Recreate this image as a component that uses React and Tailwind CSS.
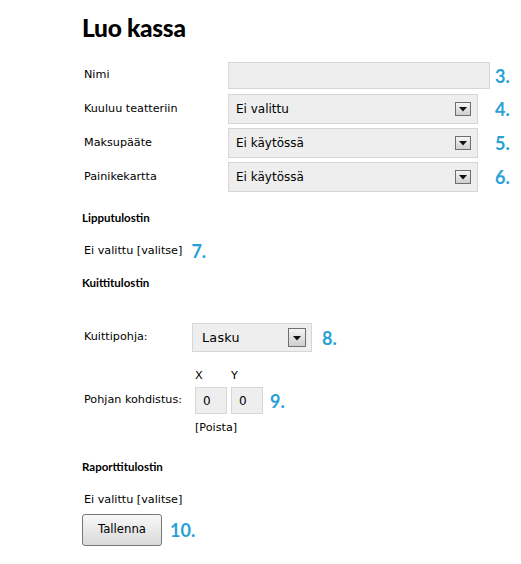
import React from "react";

const num = "font-['Lato',sans-serif] font-bold text-[18px] leading-none text-[#27a1d6]";
const label = "font-['DejaVu_Sans',sans-serif] text-[11.2px] text-[#000000]";
const heading = "font-['Lato',sans-serif] font-bold text-[11.5px] text-[#000000] h-[20px] flex items-center";

function Arrow({ big }) {
  return (
    <span
      className={
        big
          ? "flex items-center justify-center w-[18px] h-[19px] border border-[#6e6e6e] bg-gradient-to-b from-[#f4f4f4] to-[#cfcfcf]"
          : "flex items-center justify-center w-[16px] h-[14px] border border-[#6e6e6e] bg-gradient-to-b from-[#f4f4f4] to-[#cfcfcf]"
      }
    >
      <svg width="8" height="5" viewBox="0 0 8 5" className={big ? "mt-[2px]" : "mt-[1px]"}>
        <polygon points="0,0 8,0 4,4.5" fill="#111111" />
      </svg>
    </span>
  );
}

function SelectRow({ text, n }) {
  return (
    <div className="flex items-center h-[30px]">
      <div className={"w-[146px] pl-[2px] " + label}>{text.label}</div>
      <div className="w-[267px]">
        <div className="w-[250px] h-[30px] bg-[#eeeeee] border border-[#d6d6d6] flex items-center justify-between pl-[7px] pr-[6px]">
          <span className="font-['DejaVu_Sans',sans-serif] text-[12px] text-[#000000]">{text.value}</span>
          <Arrow />
        </div>
      </div>
      <span className={num}>{n}</span>
    </div>
  );
}

export default function App() {
  return (
    <div className="w-[521px] h-[564px] bg-white pl-[82px] pt-[13px] overflow-hidden">
      <h1 className="font-['Lato',sans-serif] font-black text-[24.5px] leading-[30px] h-[30px] text-[#000000] tracking-[-0.3px]">
        Luo kassa
      </h1>

      <div className="flex items-center h-[27px] mt-[19px]">
        <div className={"w-[146px] pl-[2px] " + label}>Nimi</div>
        <div className="w-[267px]">
          <div className="w-[262px] h-[27px] bg-[#eeeeee] border border-[#d6d6d6]" />
        </div>
        <span className={num}>3.</span>
      </div>

      <div className="mt-[5px] flex flex-col gap-[4px]">
        <SelectRow text={{ label: "Kuuluu teatteriin", value: "Ei valittu" }} n="4." />
        <SelectRow text={{ label: "Maksupääte", value: "Ei käytössä" }} n="5." />
        <SelectRow text={{ label: "Painikekartta", value: "Ei käytössä" }} n="6." />
      </div>

      <div className={"mt-[16px] " + heading}>Lipputulostin</div>
      <div className="mt-[13px] h-[20px] flex items-center pl-[2px]">
        <span className={label}>Ei valittu [valitse]</span>
        <span className={num + " ml-[9px]"}>7.</span>
      </div>

      <div className={"mt-[12px] " + heading}>Kuittitulostin</div>

      <div className="mt-[30px] flex items-center h-[29px]">
        <div className={"w-[110px] pl-[2px] " + label}>Kuittipohja:</div>
        <div className="w-[120px] h-[29px] bg-[#eeeeee] border border-[#d6d6d6] flex items-center justify-between pl-[9px] pr-[5px]">
          <span className="font-['DejaVu_Sans',sans-serif] text-[12.7px] tracking-[0.3px] text-[#000000]">Lasku</span>
          <Arrow big />
        </div>
        <span className={num + " ml-[10px]"}>8.</span>
      </div>

      <div className="mt-[14px] flex">
        <div className={"w-[113px] pl-[2px] mt-[21px] h-[27px] flex items-center " + label}>Pohjan kohdistus:</div>
        <div className="flex flex-col">
          <div className={"flex h-[20px] items-center " + label}>
            <span className="w-[36px]">X</span>
            <span>Y</span>
          </div>
          <div className="flex items-center mt-[1px]">
            <div className="w-[32px] h-[27px] bg-[#eeeeee] border border-[#d6d6d6] flex items-center pl-[7px]">
              <span className="font-['DejaVu_Sans',sans-serif] text-[12px] text-[#000000]">0</span>
            </div>
            <div className="w-[32px] h-[27px] ml-[4px] bg-[#eeeeee] border border-[#d6d6d6] flex items-center pl-[7px]">
              <span className="font-['DejaVu_Sans',sans-serif] text-[12px] text-[#000000]">0</span>
            </div>
            <span className={num + " ml-[7px]"}>9.</span>
          </div>
          <div className={"mt-[4px] h-[20px] flex items-center " + label}>[Poista]</div>
        </div>
      </div>

      <div className={"mt-[19px] " + heading}>Raporttitulostin</div>
      <div className="mt-[13px] h-[20px] flex items-center pl-[2px]">
        <span className={label}>Ei valittu [valitse]</span>
      </div>

      <div className="mt-[4px] flex items-center">
        <button className="w-[80px] h-[32px] rounded-[3px] border border-[#777777] bg-gradient-to-b from-[#f8f8f8] to-[#d9d9d9] font-['DejaVu_Sans',sans-serif] text-[11.7px] text-[#000000]">
          Tallenna
        </button>
        <span className={num + " ml-[8px]"}>10.</span>
      </div>
    </div>
  );
}
